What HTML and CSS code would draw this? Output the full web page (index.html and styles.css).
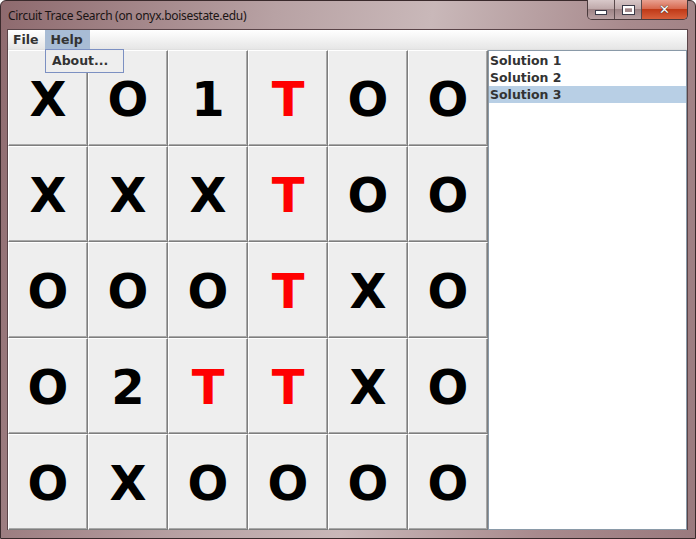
FILE: index.html
```html
<!DOCTYPE html>
<html>
<head>
<meta charset="utf-8">
<link rel="stylesheet" href="styles.css">
</head>
<body>
<div class="window">
  <div class="titlebar">
    <span class="title">Circuit Trace Search (on onyx.boisestate.edu)</span>
    <div class="caption-buttons">
      <div class="cbtn min"><span class="min-glyph"></span></div>
      <div class="cbtn max"><span class="max-glyph"></span></div>
      <div class="cbtn close"><span class="close-glyph">✕</span></div>
    </div>
  </div>
  <div class="client">
    <div class="menubar">
      <span class="menu">File</span>
      <span class="menu active">Help</span>
    </div>
    <div class="content">
      <div class="grid">
        <div class="cell">X</div><div class="cell">O</div><div class="cell">1</div><div class="cell red">T</div><div class="cell">O</div><div class="cell">O</div>
        <div class="cell">X</div><div class="cell">X</div><div class="cell">X</div><div class="cell red">T</div><div class="cell">O</div><div class="cell">O</div>
        <div class="cell">O</div><div class="cell">O</div><div class="cell">O</div><div class="cell red">T</div><div class="cell">X</div><div class="cell">O</div>
        <div class="cell">O</div><div class="cell">2</div><div class="cell red">T</div><div class="cell red">T</div><div class="cell">X</div><div class="cell">O</div>
        <div class="cell">O</div><div class="cell">X</div><div class="cell">O</div><div class="cell">O</div><div class="cell">O</div><div class="cell">O</div>
      </div>
      <div class="list">
        <div class="item">Solution 1</div>
        <div class="item">Solution 2</div>
        <div class="item selected">Solution 3</div>
      </div>
    </div>
    <div class="popup">About...</div>
  </div>
</div>
</body>
</html>
```

FILE: styles.css
```css
html, body {
  margin: 0;
  padding: 0;
  width: 696px;
  height: 539px;
  overflow: hidden;
  background: #ffffff;
}
.window {
  width: 696px;
  height: 539px;
  box-sizing: border-box;
  border: 1px solid #3a2a2c;
  border-radius: 6px 6px 0 0;
  background: linear-gradient(100deg, #8e6a6e 0%, #b8a2a4 35%, #c9b8b9 55%, #a88a8d 80%, #9a7a7e 100%);
  display: flex;
  flex-direction: column;
  padding: 0 7px 8px 6px;
}
.titlebar {
  height: 28px;
  flex: none;
  display: flex;
  align-items: flex-start;
  justify-content: space-between;
}
.title {
  font-family: "Noto Sans", sans-serif;
  font-size: 12px;
  color: #1a1414;
  margin-top: 6px;
  margin-left: 1px;
  letter-spacing: -0.3px;
}
.caption-buttons {
  display: flex;
  margin-top: -1px;
  margin-right: 0;
  border: 1px solid #4a3a3c;
  border-top: none;
  border-radius: 0 0 5px 5px;
  overflow: hidden;
  height: 19px;
}
.cbtn {
  height: 19px;
  display: flex;
  align-items: center;
  justify-content: center;
  box-sizing: border-box;
}
.min, .max {
  width: 27px;
  background: linear-gradient(#d8c8c9 0%, #c0aaab 45%, #9e8486 50%, #b8a0a2 100%);
  border-right: 1px solid #5a4a4c;
}
.close {
  width: 45px;
  background: linear-gradient(#e8a090 0%, #d86a50 45%, #c03a18 50%, #d8603c 100%);
}
.min-glyph {
  width: 10px;
  height: 3px;
  background: #fff;
  border: 1px solid #3a3a48;
  margin-top: 6px;
}
.max-glyph {
  width: 7px;
  height: 4px;
  border: 2px solid #fff;
  outline: 1px solid #3a3a48;
}
.close-glyph {
  color: #fff;
  font-family: "DejaVu Sans", sans-serif;
  font-weight: bold;
  font-size: 13px;
  line-height: 1;
  text-shadow: 0 0 1px #333, 0 0 1px #333;
}
.client {
  flex: 1;
  display: flex;
  flex-direction: column;
  position: relative;
  background: #eeeeee;
  border: 1px solid #5a4448;
  border-bottom: none;
}
.menubar {
  height: 20px;
  flex: none;
  box-sizing: border-box;
  background: linear-gradient(#ffffff, #e6e6e6);
  display: flex;
  align-items: stretch;
  padding-left: 0;
  border-bottom: 1px solid #e0e0e0;
}
.menu {
  font-family: "DejaVu Sans", sans-serif;
  font-weight: bold;
  font-size: 12.5px;
  color: #333333;
  padding: 0 6px 0 5px;
  display: flex;
  align-items: center;
}
.menu.active {
  background: #a8bcd5;
  padding: 0 7px 0 6px;
}
.content {
  display: flex;
  flex: none;
}
.grid {
  width: 480px;
  height: 480px;
  display: grid;
  grid-template-columns: repeat(6, 80px);
  grid-template-rows: repeat(5, 96px);
}
.cell {
  box-sizing: border-box;
  background: #eeeeee;
  border-top: 1px solid #ffffff;
  border-left: 1px solid #ffffff;
  border-right: 1px solid #7e7e7e;
  border-bottom: 1px solid #7e7e7e;
  box-shadow: inset -1px -1px 0 #a8a8a8;
  display: flex;
  align-items: center;
  justify-content: center;
  font-family: "DejaVu Sans", sans-serif;
  font-weight: bold;
  font-size: 48px;
  color: #000000;
  padding-top: 2px;
}
.cell.red {
  color: #ff0000;
}
.list {
  width: 199px;
  height: 480px;
  box-sizing: border-box;
  background: #ffffff;
  border: 1px solid #8a9aa8;
  padding-top: 1px;
}
.item {
  font-family: "DejaVu Sans", sans-serif;
  font-weight: bold;
  font-size: 12.5px;
  color: #333333;
  height: 17px;
  line-height: 17px;
  padding-left: 1px;
}
.item.selected {
  background: #b8cfe5;
}
.popup {
  position: absolute;
  left: 37px;
  top: 19px;
  width: 79px;
  height: 24px;
  box-sizing: border-box;
  background: #eeeeee;
  border: 1px solid #7c90c2;
  font-family: "DejaVu Sans", sans-serif;
  font-weight: bold;
  font-size: 12.5px;
  color: #333333;
  padding-left: 6px;
  line-height: 22px;
}
```
